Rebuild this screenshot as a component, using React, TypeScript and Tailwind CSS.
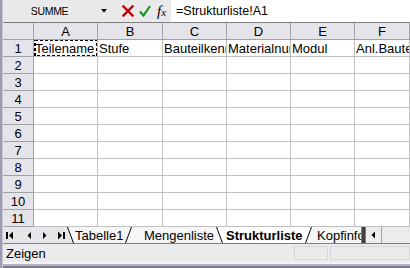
import React from 'react';

const cols = [
    { name: 'A', w: 'w-[64px]' },
    { name: 'B', w: 'w-[65px]' },
    { name: 'C', w: 'w-[64px]' },
    { name: 'D', w: 'w-[64px]' },
    { name: 'E', w: 'w-[64px]' },
    { name: 'F', w: 'flex-1' },
];

const row1 = ['Teilename', 'Stufe', 'Bauteilkennung', 'Materialnummer', 'Modul', 'Anl.Bauteil'];

const rows = Array.from({ length: 11 }, (_, i) => i + 1);

// slanted tab edge, "\" or "/"
const Edge = ({ dir, left, right }: { dir: 'down' | 'up'; left: string; right: string }) => (
    <svg width="8" height="16" className="shrink-0 block">
        <rect x="0" y="0" width="8" height="16" fill={left} />
        {dir === 'down' ? (
            <>
                <polygon points="0,0 8,0 8,16 6,16" fill={right} />
                <line x1="0.5" y1="0" x2="6.5" y2="16" stroke="#000" strokeWidth="1" />
            </>
        ) : (
            <>
                <polygon points="2,16 8,0 8,16" fill={right} />
                <line x1="1.5" y1="16" x2="7.5" y2="0" stroke="#000" strokeWidth="1" />
            </>
        )}
    </svg>
);

const NavBtn = ({ kind }: { kind: 'first' | 'prev' | 'next' | 'last' }) => (
    <svg width="16" height="16" className="block">
        {kind === 'first' && (
            <>
                <rect x="3" y="5" width="2" height="7" fill="#000" />
                <polygon points="10,4.5 10,12.5 6,8.5" fill="#000" />
            </>
        )}
        {kind === 'prev' && <polygon points="10,5 10,12 6.5,8.5" fill="#000" />}
        {kind === 'next' && <polygon points="6,5 6,12 9.5,8.5" fill="#000" />}
        {kind === 'last' && (
            <>
                <polygon points="6,4.5 6,12.5 10,8.5" fill="#000" />
                <rect x="11" y="5" width="2" height="7" fill="#000" />
            </>
        )}
    </svg>
);

const App: React.FC = () => {
    const tabBg = '#e6e6ea';
    const inactive = '#f6f6f6';
    const active = '#ffffff';

    return (
        <div className="w-[410px] h-[268px] flex bg-[#e6e6ea] overflow-hidden font-['Liberation_Sans',Arial,sans-serif] text-black">
            {/* window border left */}
            <div className="w-[3px] h-full bg-[#9c9cb0] border-r border-[#c8c8d4]" />

            <div className="flex-1 flex flex-col min-w-0">
                {/* formula bar */}
                <div className="h-[22px] flex items-stretch bg-[#e9e9ec]">
                    <div className="w-[93px] flex items-center justify-center text-[10.5px] pt-[1px] tracking-[-0.3px]">
                        SUMME
                    </div>
                    <div className="w-[16px] flex items-center justify-center">
                        <svg width="6" height="4"><polygon points="0,0 6,0 3,3.5" fill="#000" /></svg>
                    </div>
                    <div className="w-[59px] flex items-center pl-[10px]">
                        <svg width="12" height="12" className="block">
                            <path d="M1.5 1.5 L10.5 10.5 M10.5 1.5 L1.5 10.5" stroke="#c40000" strokeWidth="2.4" strokeLinecap="square" />
                        </svg>
                        <svg width="12" height="12" className="block ml-[5px]">
                            <path d="M1 6.5 L4.5 10.5 L11 1" stroke="#10961e" strokeWidth="2.2" fill="none" />
                        </svg>
                        <span className="ml-[6px] font-['Liberation_Serif',serif] italic text-[15px] leading-none">
                            f<span className="text-[11px]">x</span>
                        </span>
                    </div>
                    <div className="flex-1 bg-white flex items-center pl-[5px] text-[12.5px]">
                        =Strukturliste!A1
                    </div>
                </div>

                {/* grid */}
                <div className="bg-white border-t border-[#808080]">
                    <div className="h-[17px] flex bg-[#e4e4ea] border-b border-[#a0a0a8]">
                        <div className="w-[31px] border-r border-[#a0a0a8]" />
                        {cols.map(c => (
                            <div key={c.name} className={`${c.w} border-r border-[#a0a0a8] flex items-center justify-center text-[13px] leading-none`}>
                                {c.name}
                            </div>
                        ))}
                    </div>
                    {rows.map(r => (
                        <div key={r} className="h-[17px] flex">
                            <div className="w-[31px] bg-[#e4e4ea] border-r border-b border-[#a0a0a8] flex items-center justify-center text-[13px] leading-none pt-[1px]">
                                {r}
                            </div>
                            {cols.map((c, i) => (
                                <div key={c.name} className={`${c.w} relative border-r border-b border-[#c0c0c0] overflow-hidden`}>
                                    {r === 1 && (
                                        <span className="absolute left-[1px] right-0 top-[2px] text-[13px] leading-none whitespace-nowrap overflow-hidden">
                                            {row1[i]}
                                        </span>
                                    )}
                                    {r === 1 && i === 0 && (
                                        <svg className="absolute left-0 -top-[1px]" width="64" height="18">
                                            <rect x="1" y="1" width="62" height="16" fill="none" stroke="#000" strokeWidth="2" strokeDasharray="3 2" />
                                        </svg>
                                    )}
                                </div>
                            ))}
                        </div>
                    ))}
                </div>

                {/* sheet tabs */}
                <div className="h-[17px] flex bg-[#e6e6ea] border-b border-[#808080] text-[13px] leading-none">
                    <div className="w-[64px] flex items-center">
                        <NavBtn kind="first" />
                        <div className="ml-[3px]"><NavBtn kind="prev" /></div>
                        <NavBtn kind="next" />
                        <NavBtn kind="last" />
                    </div>
                    <Edge dir="down" left={tabBg} right={inactive} />
                    <div className="w-[49px] bg-[#f6f6f6] flex items-center whitespace-nowrap">Tabelle1</div>
                    <Edge dir="up" left={inactive} right={inactive} />
                    <div className="w-[84px] bg-[#f6f6f6] flex items-center pl-[12px] whitespace-nowrap">Mengenliste</div>
                    <Edge dir="down" left={inactive} right={active} />
                    <div className="w-[80px] bg-white flex items-center pl-[2px] font-bold whitespace-nowrap">Strukturliste</div>
                    <Edge dir="up" left={active} right={inactive} />
                    <div className="w-[49px] bg-[#f6f6f6] flex items-center pl-[5px] whitespace-nowrap overflow-hidden">Kopfinformation</div>
                    <div className="w-[5px] bg-[#404040] border-x border-[#808080]" />
                    <div className="w-[16px] flex items-center justify-center border-r border-[#a0a0a8] bg-[#ececef]">
                        <svg width="6" height="8"><polygon points="4,0.5 4,7.5 0.5,4" fill="#000" /></svg>
                    </div>
                    <div className="flex-1 bg-[#ececef]" />
                </div>

                {/* status bar */}
                <div className="h-[18px] flex items-center bg-[#ebebee] text-[13px] leading-none">
                    <div className="w-[291px] pl-[3px] pt-[1px]">Zeigen</div>
                    <div className="w-[34px] h-[14px] border border-[#d6d6da]" />
                    <div className="flex-1 h-[14px] ml-[2px] border border-[#d6d6da]" />
                </div>

                {/* bottom frame */}
                <div className="h-[6px] bg-[#b4b4c0] border-t-2 border-[#f4f4f6] border-b-2 border-b-[#7c7c8c]" />
            </div>
        </div>
    );
};

export default App;
